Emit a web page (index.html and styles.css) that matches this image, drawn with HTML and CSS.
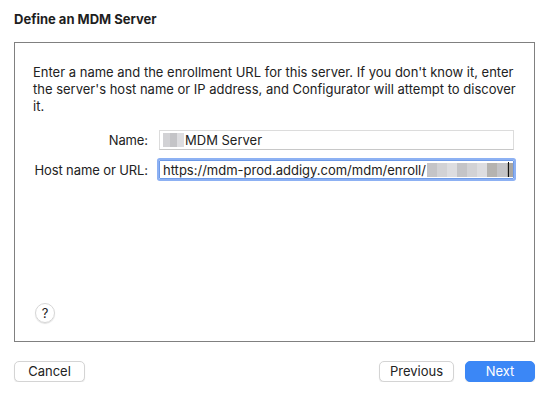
FILE: index.html
```html
<!DOCTYPE html>
<html>
<head>
<meta charset="utf-8">
<link rel="stylesheet" href="styles.css">
</head>
<body>
<div class="sheet">
  <h1 class="title">Define an MDM Server</h1>
  <div class="panel">
    <p class="intro">Enter a name and the enrollment URL for this server. If you don't know it, enter<br>the server's host name or IP address, and Configurator will attempt to discover<br>it.</p>
    <div class="form">
      <label class="label">Name:</label>
      <div class="field">
        <span class="blur blur-name"><i class="b1"></i><i class="b2"></i><i class="b3"></i></span><span>MDM Server</span>
      </div>
      <label class="label">Host name or URL:</label>
      <div class="field focused">
        <span>https://mdm-prod.addigy.com/mdm/enroll/</span><span class="blur blur-url"><i class="b2"></i><i class="b1"></i><i class="b3"></i><i class="b2"></i><i class="b1"></i><i class="b3"></i><i class="b4"></i><i class="b2"></i><i class="b5"></i></span><span class="caret"></span>
      </div>
    </div>
    <div class="help">?</div>
  </div>
  <div class="actions">
    <button class="btn">Cancel</button>
    <div class="right">
      <button class="btn">Previous</button>
      <button class="btn primary">Next</button>
    </div>
  </div>
</div>
</body>
</html>
```
FILE: styles.css
```css
html, body {
  margin: 0;
  padding: 0;
  background: #ffffff;
}
body {
  font-family: Inter, "Liberation Sans", sans-serif;
  font-size: 13px;
  color: #222222;
}
.sheet {
  display: flex;
  flex-direction: column;
  padding: 10px 17px 0 14px;
}
.title {
  margin: 0;
  font-size: 13px;
  font-weight: 700;
  line-height: 18px;
  color: #1e1e1e;
  height: 32px;
}
.panel {
  box-sizing: border-box;
  border: 1px solid #808080;
  height: 300px;
  display: flex;
  flex-direction: column;
  padding: 0 20px 18px 18px;
}
.intro {
  margin: 21px 0 0 0;
  line-height: 17px;
  white-space: nowrap;
}
.form {
  display: grid;
  grid-template-columns: 115px 355px;
  column-gap: 11px;
  row-gap: 10px;
  margin-top: 15px;
  align-items: center;
}
.label {
  text-align: right;
  white-space: nowrap;
  letter-spacing: -0.1px;
}
.field {
  height: 20px;
  box-sizing: border-box;
  border: 1px solid #dcdcdc;
  border-bottom-color: #c8c8c8;
  display: flex;
  align-items: center;
  padding-left: 3px;
  white-space: nowrap;
  overflow: hidden;
  position: relative;
}
.field.focused {
  height: 19px;
  border: 1px solid #6f9be8;
  box-shadow: 0 0 0 2px #8db1f3;
  border-radius: 1px;
}
.blur {
  display: inline-flex;
  height: 14px;
}
.blur i {
  display: block;
  width: 7px;
  height: 100%;
}
.blur-name {
  margin-right: 1px;
}
.blur-url {
  margin-left: 1px;
}
.blur-url i {
  width: 10px;
}
.b1 { background: #d2d2d5; }
.b2 { background: #c4c4c7; }
.b3 { background: #dddde0; }
.b4 { background: #b5b3b0; }
.b5 { background: #a9a6a2; }
.caret {
  position: absolute;
  right: 4px;
  top: 1px;
  bottom: 1px;
  width: 1px;
  background: #111;
}
.help {
  margin-top: auto;
  margin-left: 2px;
  width: 20px;
  height: 20px;
  border-radius: 50%;
  border: 1px solid #d6d6d6;
  box-shadow: 0 1px 1px rgba(0,0,0,0.12);
  box-sizing: border-box;
  display: flex;
  align-items: center;
  justify-content: center;
  font-size: 13px;
  color: #222;
}
.actions {
  display: flex;
  justify-content: space-between;
  margin-top: 19px;
}
.right {
  display: flex;
  gap: 11px;
}
.btn {
  font-family: Inter, "Liberation Sans", sans-serif;
  font-size: 13px;
  color: #222;
  background: #ffffff;
  border: 1px solid #d4d4d4;
  border-radius: 5px;
  box-shadow: 0 1px 1px rgba(0,0,0,0.10);
  height: 21px;
  width: 71px;
  padding: 0;
  line-height: 19px;
}
.right .btn:first-child {
  width: 75px;
}
.btn.primary {
  background: #3b87f6;
  border-color: #3b87f6;
  color: #ffffff;
  width: 70px;
}
```
